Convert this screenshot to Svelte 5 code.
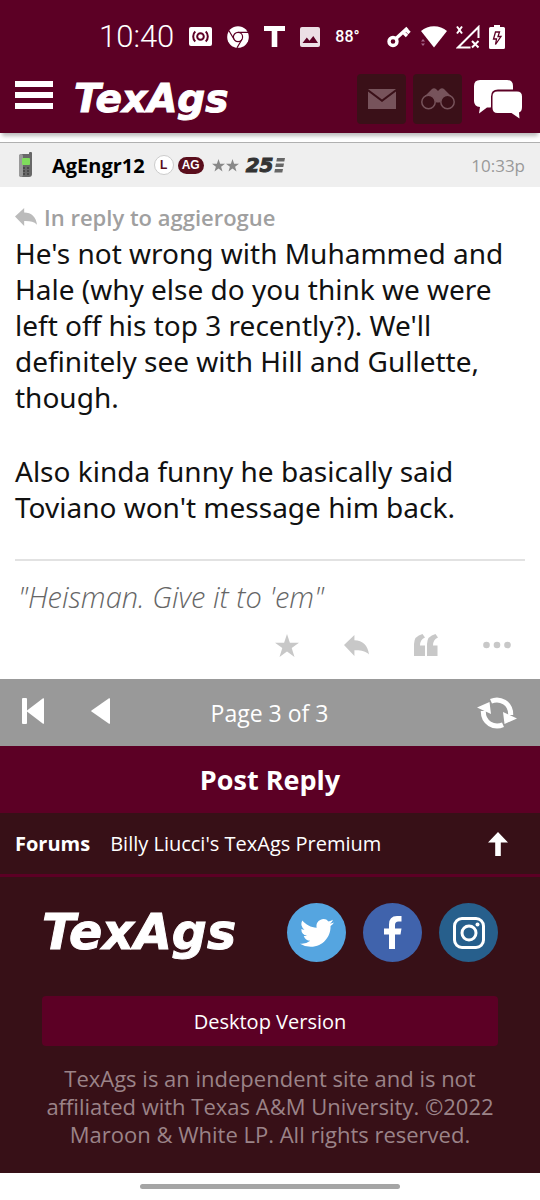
<script lang="ts">
  type Post = {
    user: string;
    time: string;
    replyTo: string;
    paragraphs: string[];
    signature: string;
  };

  const post: Post = {
    user: "AgEngr12",
    time: "10:33p",
    replyTo: "aggierogue",
    paragraphs: [
      "He's not wrong with Muhammed and Hale (why else do you think we were left off his top 3 recently?). We'll definitely see with Hill and Gullette, though.",
      "Also kinda funny he basically said Toviano won't message him back.",
    ],
    signature: "\"Heisman. Give it to 'em\"",
  };

  let page = $state(3);
  const pages = 3;
</script>

{#snippet replyArrow(width: number, height: number)}
  <svg {width} {height} viewBox="0 0 24 20" preserveAspectRatio="none" aria-hidden="true">
    <path fill="currentColor" d="M0 9.5 10 0v5C18 5 23 10 24 18.500 20.500 15 16 14.300 10 14.500V20z" />
  </svg>
{/snippet}

<div class="screen">
  <div class="top">
    <div class="status">
      <div class="left">
        <span class="clock">10:40</span>
        <svg width="23" height="19" viewBox="0 0 23 19">
          <rect width="23" height="19" rx="2" fill="#fff" />
          <g fill="none" stroke="#5c0025" stroke-width="2">
            <circle cx="11.5" cy="9.5" r="3.300" />
            <path d="M6.300 4.500C3.500 7 3.500 12 6.300 14.500M16.700 4.500c2.800 2.500 2.800 7.500 0 10" />
          </g>
        </svg>
        <svg width="22" height="22" viewBox="0 0 22 22">
          <circle cx="11" cy="11" r="10.800" fill="#fff" />
          <g fill="none" stroke="#5c0025" stroke-width="1.200">
            <circle cx="11" cy="11" r="4.600" />
            <path d="M11 6.400h10M7 13.300 2 4.800M15 13.300 10 21.800" />
          </g>
        </svg>
        <svg width="21" height="21" viewBox="0 0 21 21">
          <path fill="#fff" d="M0 0h21v5h-7.700v16H7.700V5H0z" />
        </svg>
        <svg width="20" height="20" viewBox="0 0 20 20">
          <rect width="20" height="20" rx="2" fill="#ecdfe5" />
          <path fill="#5c0025" d="M2.500 16 6.800 10.500l2.700 3.300L13.300 9l4.700 7z" />
        </svg>
        <span class="temp">88°</span>
      </div>
      <div class="right">
        <svg width="24" height="22" viewBox="0 0 24 22">
          <circle cx="6" cy="15.500" r="4" fill="none" stroke="#fff" stroke-width="3.400" />
          <path d="M9 12.500 20.500 2M16 6l4 4M19 3.500l3.500 3.500" fill="none" stroke="#fff" stroke-width="3.400" />
        </svg>
        <svg width="27" height="22" viewBox="0 0 27 22">
          <path fill="#fff" d="M1 5C8-1.300 20-1.300 27 5L14 21.500z" />
          <path fill="#a5648a" d="M1 15.500 3 13l2 2.500zM1 17.500h4l-2 2.500z" />
        </svg>
        <svg width="24" height="24" viewBox="0 0 24 24" fill="none" stroke="#fff" stroke-width="2">
          <path d="M22.500 13V2L2 22.500h12.500M1 1.500l5 7M6 1.500l-5 7M16 16l6.500 6.500M22.500 16 16 22.500" />
        </svg>
        <svg width="16" height="24" viewBox="0 0 16 24">
          <path fill="#fff" d="M5 0h6v2h3.500Q16 2 16 3.500v19q0 1.500-1.500 1.500h-13Q0 24 0 22.500v-19Q0 2 1.500 2H5z" />
          <path d="M6.500 7h4L9 11.500h3L6.500 19.500l1-5.500H4.500z" fill="none" stroke="#5c0025" stroke-width="1.300" />
        </svg>
      </div>
    </div>

    <header>
      <button class="menu" aria-label="Menu"><i></i><i></i><i></i></button>
      <a class="logo" href="#home">TexAgs</a>
      <div class="tools">
        <button class="tool" aria-label="Messages">
          <svg width="28" height="20" viewBox="0 0 28 20" fill="#77535b">
            <path d="M0 0h28L14 10.500z" />
            <path d="M0 2.500 14 13 28 2.500V20H0z" />
          </svg>
        </button>
        <button class="tool" aria-label="Watch list">
          <svg width="34" height="22" viewBox="0 0 34 22">
            <path fill="#77535b" d="M4 8 11 1q2-1.500 4 0l2 2 2-2q2-1.500 4 0l7 7-10 5-1.500 1.500h-3L14 13z" />
            <g fill="#3a1018" stroke="#77535b" stroke-width="1.500">
              <circle cx="7.500" cy="14" r="6.700" />
              <circle cx="26.500" cy="14" r="6.700" />
            </g>
          </svg>
        </button>
        <button class="chat" aria-label="Forums">
          <svg width="48" height="39" viewBox="0 0 48 39" fill="#fff">
            <path d="M6 0h27q6 0 6 6v3.500H24q-7 0-7 7V26q0 1-.3 1.500H13L5 33.500 6 27Q0 26.500 0 21V6q0-6 6-6z" />
            <path d="M23.500 11.500H43q5 0 5 5V27q0 4.500-3 5.500l.5 6-8-5.500h-14q-5 0-5-5V16.500q0-5 5-5z" />
          </svg>
        </button>
      </div>
    </header>
  </div>

  <article>
    <div class="userbar">
      <svg class="phone" width="16" height="26" viewBox="0 0 16 26">
        <rect x="11" y="0" width="3" height="8" rx="1" fill="#666" />
        <rect x="1" y="2" width="13" height="23" rx="3" fill="#686868" />
        <rect x="1" y="2" width="4" height="23" rx="2" fill="#999" />
        <rect x="4" y="6" width="8" height="7" rx="1" fill="#7fdc5c" />
        <path d="M5 16h2M9 16h2M5 19h2M9 19h2M5 22h2M9 22h2" stroke="#3f3f3f" stroke-width="1.500" />
      </svg>
      <a class="name" href="#user">{post.user}</a>
      <span class="badges">
        <span class="letter">L</span>
        <span class="ag">AG</span>
        <svg class="stars" width="27" height="13" viewBox="0 0 27 13" fill="#888">
          <path d="m6.500 0 1.600 4.700H13L9.100 7.700 10.500 12.500 6.500 9.600 2.500 12.500 3.900 7.700 0 4.700h4.900z" />
          <path d="m20.500 0 1.600 4.700H27L23.100 7.700 24.500 12.500 20.500 9.600 16.500 12.500 17.900 7.700 14 4.700h4.900z" />
        </svg>
        <span class="years">25</span>
        <svg width="11" height="15" viewBox="0 0 11 15" fill="#666">
          <path d="M3 0h8l-.7 3.500H2.300zM2 5.500h8L9.300 9h-8zM1 11h8l-.7 3.500H.3z" />
        </svg>
      </span>
      <time>{post.time}</time>
    </div>

    <div class="body">
      <a class="inreply" href="#parent">
        {@render replyArrow(22, 18)}
        <span>In reply to {post.replyTo}</span>
      </a>
      {#each post.paragraphs as text}
        <p>{text}</p>
      {/each}
      <div class="signature">{post.signature}</div>
      <div class="actions">
        <button aria-label="Star">
          <svg width="24" height="23" viewBox="0 0 24 23" fill="currentColor">
            <path d="m12 0 2.900 8.700H24l-7.300 5.400 2.800 8.900L12 17.600 4.500 23l2.800-8.900L0 8.700h9.100z" />
          </svg>
        </button>
        <button aria-label="Reply">{@render replyArrow(25, 21)}</button>
        <button aria-label="Quote">
          <svg width="24" height="22" viewBox="0 0 24 22" fill="currentColor">
            <path d="M0 22V10Q0 2 8.500 0L11 3.500Q6 5.500 6 11.500h5V22zM13 22V10Q13 2 21.500 0L24 3.500Q19 5.500 19 11.500h4.500V22z" />
          </svg>
        </button>
        <button aria-label="More">
          <svg width="28" height="8" viewBox="0 0 28 8" fill="currentColor">
            <circle cx="3.500" cy="4" r="3.300" /><circle cx="14" cy="4" r="3.300" /><circle cx="24.500" cy="4" r="3.300" />
          </svg>
        </button>
      </div>
    </div>
  </article>

  <nav class="pager">
    <div class="pagebtns">
      <button aria-label="First page" onclick={() => (page = 1)}>
        <svg width="22" height="26" viewBox="0 0 22 26" fill="#fff">
          <rect width="5" height="26" rx="1" />
          <path d="M21 .3q1-.5 1 .7v24q0 1.200-1 .7L5 13.600q-.7-.6 0-1.200z" />
        </svg>
      </button>
      <button aria-label="Previous page" onclick={() => (page = Math.max(1, page - 1))}>
        <svg width="19" height="26" viewBox="0 0 19 26" fill="#fff">
          <path d="M18 .3q1-.5 1 .7v24q0 1.200-1 .7L.5 13.600q-.7-.6 0-1.200z" />
        </svg>
      </button>
    </div>
    <span>Page {page} of {pages}</span>
    <button class="refresh" aria-label="Refresh">
      <svg width="40" height="32" viewBox="0 0 40 32">
        <g fill="none" stroke="#fff" stroke-width="5">
          <path d="M14 4.300C23 .5 34 6 33.700 18" />
          <path d="M26 27.700C17 31.500 6 26 6.300 14" />
        </g>
        <path fill="#fff" d="M0 10.500 12.500 5l1.500 12zM40 21.500 27.500 27 26 15z" />
      </svg>
    </button>
  </nav>

  <button class="post-reply">Post Reply</button>

  <nav class="crumbs">
    <a class="strong" href="#forums">Forums</a>
    <a href="#premium">Billy Liucci's TexAgs Premium</a>
    <a class="up" href="#top" aria-label="Back to top">
      <svg width="20" height="24" viewBox="0 0 20 24" fill="#fff">
        <path d="m10 0 10 10.500h-7.200V24H7.200V10.500H0z" />
      </svg>
    </a>
  </nav>

  <footer>
    <div class="brand">
      <a class="logo big" href="#home">TexAgs</a>
      <div class="social">
        <a class="twitter" href="#twitter" aria-label="Twitter">
          <svg width="34" height="34" viewBox="0 0 24 24" fill="#fff">
            <path d="M23.950 4.570a10 10 0 0 1-2.820.77 4.960 4.960 0 0 0 2.160-2.720c-.95.550-2 .95-3.130 1.180a4.920 4.920 0 0 0-8.380 4.480C7.690 8.090 4.070 6.130 1.640 3.160a4.920 4.920 0 0 0 1.520 6.570 4.900 4.900 0 0 1-2.230-.61v.06a4.920 4.920 0 0 0 3.950 4.830 5 5 0 0 1-2.210.08 4.940 4.940 0 0 0 4.600 3.420A9.870 9.870 0 0 1 0 19.540a14 14 0 0 0 7.550 2.210c9.050 0 14-7.500 14-13.980 0-.21 0-.42-.02-.63a9.940 9.940 0 0 0 2.460-2.550z" />
          </svg>
        </a>
        <a class="facebook" href="#facebook" aria-label="Facebook">
          <svg width="18" height="33" viewBox="0 0 18 33" fill="#fff">
            <path d="M5 33V18.500H0v-6h5V8.500Q5 0 13 0h4.500v5.500h-3Q11 5.500 11 9v3.500h6.500l-1 6H11V33z" />
          </svg>
        </a>
        <a class="instagram" href="#instagram" aria-label="Instagram">
          <svg width="32" height="32" viewBox="0 0 32 32" fill="none" stroke="#fff" stroke-width="3">
            <rect x="1.500" y="1.500" width="29" height="29" rx="7.500" />
            <circle cx="16" cy="16" r="7" />
            <circle cx="24.500" cy="7.500" r="2" fill="#fff" stroke="none" />
          </svg>
        </a>
      </div>
    </div>
    <button class="desktop">Desktop Version</button>
    <p>TexAgs is an independent site and is not affiliated with Texas A&amp;M University. ©2022 Maroon &amp; White LP. All rights reserved.</p>
  </footer>

  <div class="gesture"><i></i></div>
</div>

<style>
  :global(body) {
    margin: 0;
    background: #fff;
  }

  .screen {
    font-family: "Open Sans", "Noto Sans", sans-serif;
    color: #111;
  }

  button {
    display: flex;
    align-items: center;
    justify-content: center;
    padding: 0;
    border: 0;
    background: none;
    color: inherit;
    font: inherit;
    cursor: pointer;
  }

  a {
    color: inherit;
    text-decoration: none;
  }

  svg {
    display: block;
    flex: none;
  }

  .top {
    background: #5c0025;
    color: #fff;
    box-shadow: 0 5px 4px -2px #bbb;
  }

  .status {
    display: flex;
    justify-content: space-between;
    box-sizing: border-box;
    height: 65px;
    padding: 8px 35px 0 99px;
  }

  .left,
  .right {
    display: flex;
    align-items: center;
    gap: 15px;
  }

  .right {
    gap: 9px;
  }

  .clock {
    font: 300 31px "Roboto", sans-serif;
  }

  .temp {
    font: 500 16px "Roboto", sans-serif;
  }

  header {
    display: flex;
    align-items: center;
    height: 68px;
    padding: 0 18px 0 15px;
  }

  .menu {
    flex-direction: column;
    gap: 5px;
    margin: 0 21px 8px 0;
  }

  .menu i {
    width: 38px;
    height: 6px;
    background: #fff;
  }

  .logo {
    font: italic bold 39px/44px "DejaVu Sans", sans-serif;
    color: #fff;
    -webkit-text-stroke: 1px #fff;
  }

  .tools {
    display: flex;
    align-items: center;
    gap: 7px;
    margin-left: auto;
  }

  .tool {
    width: 49px;
    height: 50px;
    border-radius: 4px;
    background: #3a1018;
  }

  .chat {
    margin-left: 5px;
  }

  .userbar {
    display: flex;
    align-items: center;
    height: 44px;
    margin-top: 9px;
    padding: 0 15px 0 18px;
    border-top: 1px solid #b0b0b0;
    background: #efefef;
  }

  .name {
    margin: 0 9px 0 18px;
    font-size: 20px;
    font-weight: 700;
    color: #000;
  }

  .badges {
    display: flex;
    align-items: center;
    gap: 4px;
  }

  .letter,
  .ag {
    box-sizing: border-box;
    height: 20px;
    border: 1px solid #ccc;
    border-radius: 10px;
    background: #fff;
    color: #5a0e1c;
    font: bold 12px/18px "Liberation Sans", sans-serif;
    text-align: center;
    width: 20px;
  }

  .ag {
    width: 26px;
    height: 17px;
    border: 0;
    background: #5a0e1c;
    color: #fff;
    line-height: 17px;
  }

  .stars {
    margin: 0 3px 0 4px;
  }

  .years {
    margin-right: -4px;
    font: italic bold 20px/20px "DejaVu Sans", sans-serif;
    color: #333;
    -webkit-text-stroke: 1px #333;
  }

  time {
    margin-left: auto;
    font-size: 17px;
    color: #999;
  }

  .body {
    padding: 16px 15px 0;
  }

  .inreply {
    display: flex;
    align-items: center;
    gap: 7px;
    font-size: 22px;
    font-weight: 600;
    line-height: 28px;
    color: #a0a0a0;
  }

  .inreply svg {
    color: #bbb;
  }

  .body p {
    margin: 4px 0 38px;
    font-family: "Noto Sans", "Open Sans", sans-serif;
    font-size: 28px;
    line-height: 36px;
  }

  .body p + p {
    margin: 0 0 34px;
  }

  .signature {
    padding: 18px 3px 0;
    border-top: 2px solid #e2e2e2;
    font-size: 29px;
    font-style: italic;
    font-weight: 300;
    line-height: 36px;
    color: #666;
  }

  .actions {
    display: flex;
    justify-content: flex-end;
    gap: 45px;
    height: 60px;
    padding: 0 14px 4px 0;
    color: #c8c8c8;
  }

  .pager {
    display: grid;
    grid-template-columns: 1fr auto 1fr;
    align-items: center;
    height: 67px;
    padding: 0 23px 0 22px;
    background: #999;
    color: #fff;
    font-size: 23px;
  }

  .pagebtns {
    display: flex;
    gap: 47px;
    margin-bottom: 4px;
  }

  .refresh {
    justify-self: end;
  }

  .post-reply {
    width: 100%;
    height: 67px;
    background: #5c0025;
    color: #fff;
    font-size: 27px;
    font-weight: 700;
  }

  .crumbs {
    display: flex;
    align-items: center;
    gap: 20px;
    height: 61px;
    padding: 0 32px 0 15px;
    border-bottom: 3px solid #5c0025;
    background: #371017;
    color: #fff;
    font-size: 20px;
  }

  .strong {
    font-weight: 700;
  }

  .up {
    margin-left: auto;
  }

  footer {
    padding: 26px 42px 25px;
    background: #371017;
  }

  .brand,
  .social {
    display: flex;
    align-items: center;
    justify-content: space-between;
  }

  .big {
    font-size: 49px;
    line-height: 56px;
  }

  .social {
    gap: 17px;
  }

  .social a {
    display: flex;
    align-items: center;
    justify-content: center;
    width: 59px;
    height: 59px;
    border-radius: 50%;
  }

  .twitter {
    background: #55a5e0;
  }

  .facebook {
    background: #4063ac;
  }

  .instagram {
    background: #275f8c;
  }

  .desktop {
    width: 100%;
    height: 50px;
    margin: 34px 0 18px;
    border-radius: 4px;
    background: #5c0025;
    color: #fff;
    font-size: 20px;
  }

  footer p {
    margin: 0;
    font-size: 22px;
    line-height: 28px;
    text-align: center;
    color: #9b8388;
  }

  .gesture {
    display: flex;
    justify-content: center;
    padding: 11px 0;
  }

  .gesture i {
    width: 48%;
    height: 5px;
    border-radius: 3px;
    background: #a5a5a5;
  }
</style>
